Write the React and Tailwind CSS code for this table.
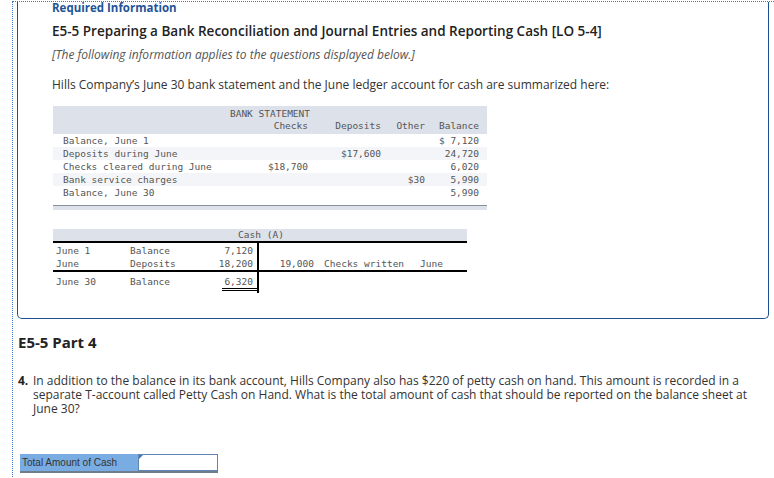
import React from "react";

const mono = { fontFamily: '"DejaVu Sans Mono", "Liberation Mono", monospace' };

const bankRows = [
  { label: "Balance, June 1", checks: "", deposits: "", other: "", balance: "$ 7,120" },
  { label: "Deposits during June", checks: "", deposits: "$17,600", other: "", balance: "24,720" },
  { label: "Checks cleared during June", checks: "$18,700", deposits: "", other: "", balance: "6,020" },
  { label: "Bank service charges", checks: "", deposits: "", other: "$30", balance: "5,990" },
  { label: "Balance, June 30", checks: "", deposits: "", other: "", balance: "5,990" },
];

const BankStatement = () => (
  <div className="w-[434px] text-[9.5px] text-[#555]" style={mono}>
    <div className="bg-[#dde1ea] h-[28px] pt-[2px]">
      <div className="text-center leading-[12px]">BANK STATEMENT</div>
      <div className="grid grid-cols-[200px_55px_73px_44px_54px_8px] leading-[12px]">
        <span />
        <span className="text-right">Checks</span>
        <span className="text-right">Deposits</span>
        <span className="text-right">Other</span>
        <span className="text-right">Balance</span>
        <span />
      </div>
    </div>
    {bankRows.map((r, i) => (
      <div
        key={r.label}
        className={`grid grid-cols-[200px_55px_73px_44px_54px_8px] h-[13px] leading-[13px] ${
          i % 2 === 1 ? "bg-[#f4f5f8]" : "bg-white"
        }`}
      >
        <span className="pl-[10px] whitespace-pre">{r.label}</span>
        <span className="text-right">{r.checks}</span>
        <span className="text-right">{r.deposits}</span>
        <span className="text-right">{r.other}</span>
        <span className="text-right">{r.balance}</span>
        <span />
      </div>
    ))}
    <div className="mt-[6px] h-[5px] bg-[#dde1ea] border-t border-[#8a8f99]" />
  </div>
);

const TAccount = () => (
  <div className="w-[414px] text-[9.5px] text-[#555]" style={mono}>
    <div className="bg-[#dde1ea] h-[12px] leading-[12px] text-center pl-[2px]">Cash (A)</div>
    <div className="flex border-t-2 border-black">
      <div className="w-[206px] border-r-2 border-black pl-[3px] pr-[4px] pt-[1px]">
        <div className="grid grid-cols-[74px_1fr_auto] h-[13px] leading-[13px]">
          <span>June 1</span>
          <span>Balance</span>
          <span className="text-right">7,120</span>
        </div>
        <div className="grid grid-cols-[74px_1fr_auto] h-[13px] leading-[13px]">
          <span>June</span>
          <span>Deposits</span>
          <span className="text-right">18,200</span>
        </div>
      </div>
      <div className="flex-1 pt-[1px]">
        <div className="h-[13px]" />
        <div className="flex h-[13px] leading-[13px]">
          <span className="w-[55px] text-right">19,000</span>
          <span className="w-[106px] pl-[10px]">Checks written</span>
          <span>June</span>
        </div>
      </div>
    </div>
    <div className="flex border-t-2 border-black">
      <div className="w-[206px] border-r-2 border-black pl-[3px] pt-[4px] pb-[2px]">
        <div className="grid grid-cols-[74px_1fr_auto] leading-[12px]">
          <span>June 30</span>
          <span>Balance</span>
          <span className="text-right w-[35px] pr-[4px] border-b-[3px] border-double border-black">6,320</span>
        </div>
      </div>
      <div className="flex-1" />
    </div>
  </div>
);

export default function App() {
  return (
    <div
      className="w-[774px] h-[478px] bg-white overflow-hidden pt-px"
      style={{ fontFamily: '"Open Sans", Lato, sans-serif' }}
    >
      <div className="ml-[12px] h-[480px] border-l border-t border-dotted border-[#3d78c6] pl-[4px]">
        <div className="mr-[5px] border-x border-b border-[#1d4f8f] rounded-b-[5px] pl-[34px] pb-[25px]">
          <div className="text-[11.5px] font-bold text-[#1f5396] leading-[12px]">Required Information</div>
          <div className="mt-[9px] text-[13.5px] font-semibold text-[#222] leading-[16px]">
            E5-5 Preparing a Bank Reconciliation and Journal Entries and Reporting Cash [LO 5-4]
          </div>
          <div className="mt-[8px] text-[12px] italic text-[#555] leading-[16px]">
            [The following information applies to the questions displayed below.]
          </div>
          <div className="mt-[14px] text-[12px] text-[#333] leading-[16px]">
            Hills Company’s June 30 bank statement and the June ledger account for cash are summarized here:
          </div>
          <div className="mt-[13px] ml-px">
            <BankStatement />
          </div>
          <div className="mt-[19px] ml-px">
            <TAccount />
          </div>
        </div>
        <div className="mt-[14px] text-[15px] font-bold text-[#222] leading-[18px] pl-px">E5-5 Part 4</div>
        <div className="mt-[23px] flex text-[12px] text-[#333] leading-[14px] pl-px">
          <span className="w-[15px] shrink-0 font-bold text-[#222]">4.</span>
          <p className="w-[718px]">
            In addition to the balance in its bank account, Hills Company also has $220 of petty cash on hand. This
            amount is recorded in a separate T-account called Petty Cash on Hand. What is the total amount of cash
            that should be reported on the balance sheet at June 30?
          </p>
        </div>
        <div className="mt-[38px] ml-[3px] flex h-[19px] border-b-2 border-[#6f7d8c] w-[198px]">
          <div
            className="w-[117px] bg-[#79ace2] text-[10px] text-[#333] leading-[17px] pl-[2px]"
            style={{ fontFamily: '"Liberation Sans", Arial, sans-serif' }}
          >
            Total Amount of Cash
          </div>
          <div className="relative flex-1 bg-[#79ace2] pl-px">
            <div className="h-full bg-white border border-[#5f86b3]" />
            <div className="absolute left-[2px] top-px w-0 h-0 border-t-[4px] border-r-[4px] border-t-[#3d78c6] border-r-transparent" />
          </div>
        </div>
      </div>
    </div>
  );
}
